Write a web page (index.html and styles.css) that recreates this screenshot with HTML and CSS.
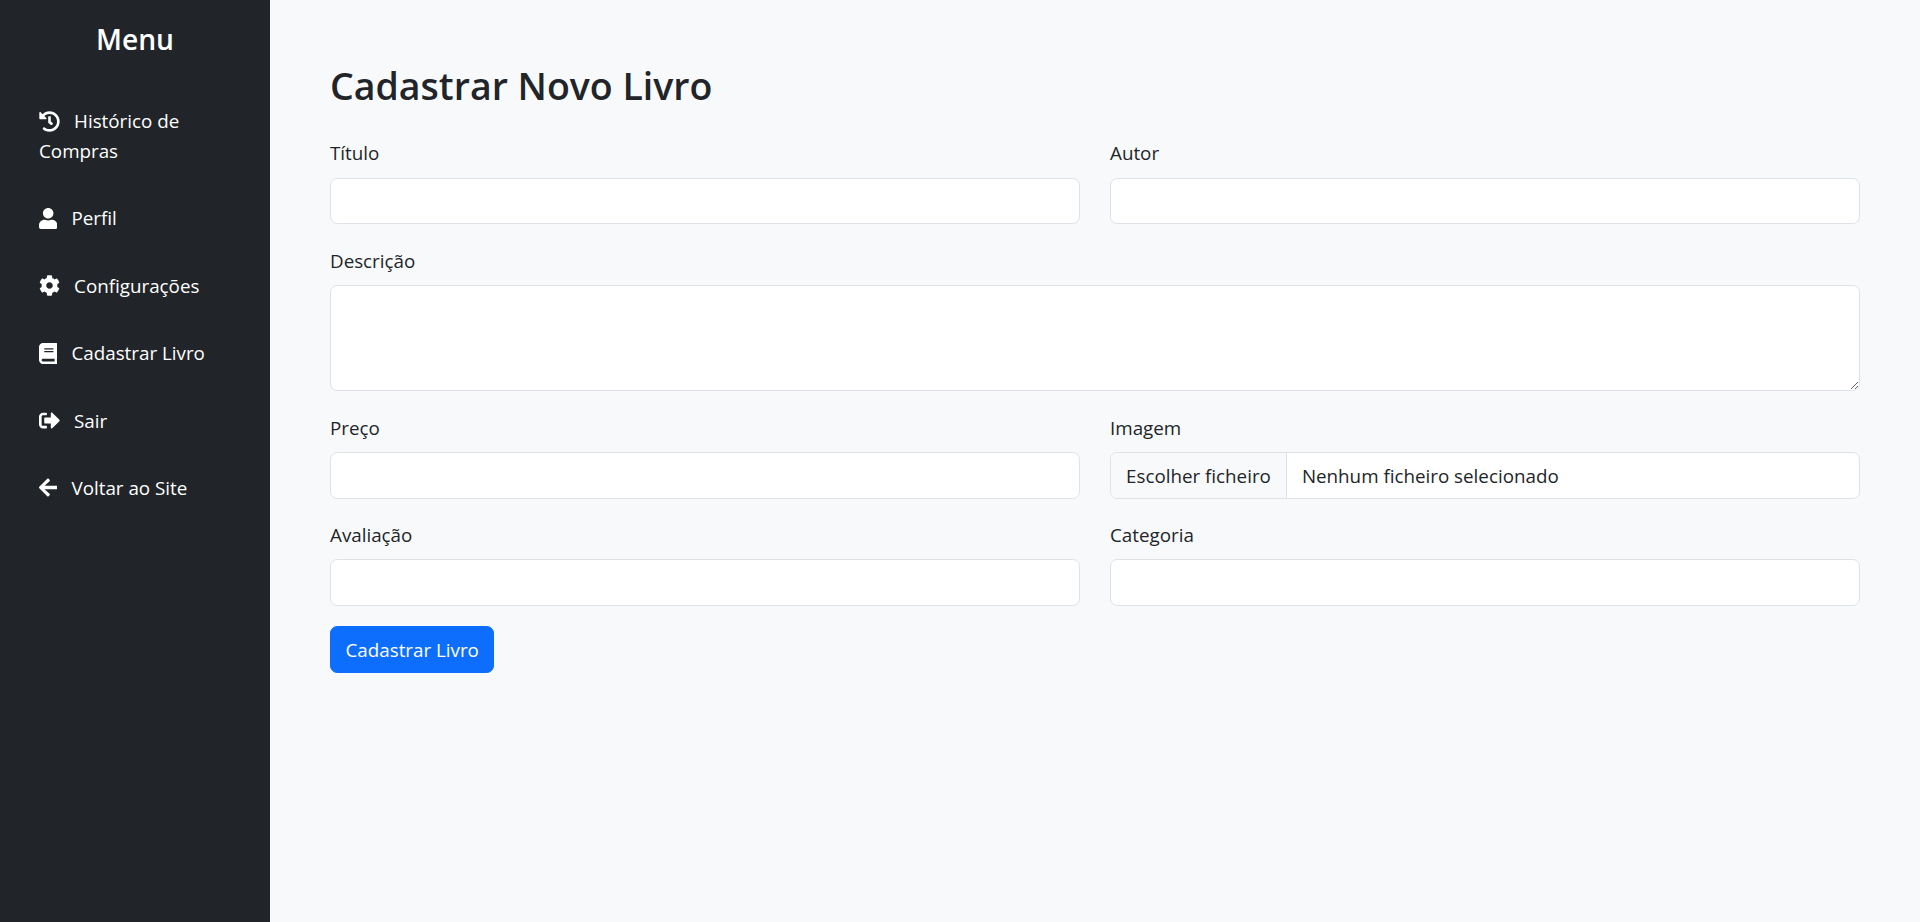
FILE: index.html
```html
<!DOCTYPE html>
<html lang="pt">
   <head>
      <title>Cadastrar Novo Livro</title>
      <link rel="stylesheet" href="styles.css">
   </head>
   <body>
      <div class="sidebar">
         <h4>Menu</h4>
         <ul class="side-menu">
            <li><a href="#"><svg class="icon w512" viewBox="0 0 512 512"><path d="M504 255.531c.253 136.64-111.18 248.372-247.82 248.468-59.015.042-113.223-20.53-155.822-54.911-11.077-8.94-11.905-25.541-1.839-35.607l11.267-11.267c8.609-8.609 22.353-9.551 31.891-1.984C173.062 425.135 212.781 440 256 440c101.705 0 184-82.311 184-184 0-101.705-82.311-184-184-184-48.814 0-93.149 18.969-126.068 49.932l50.754 50.754c10.08 10.08 2.941 27.314-11.313 27.314H24c-8.837 0-16-7.163-16-16V38.627c0-14.254 17.234-21.393 27.314-11.314l49.372 49.372C129.209 34.136 189.552 8 256 8c136.81 0 247.747 110.78 248 247.531zm-180.912 78.784l9.823-12.63c8.138-10.463 6.253-25.542-4.21-33.679L288 256.349V152c0-13.255-10.745-24-24-24h-16c-13.255 0-24 10.745-24 24v135.651l65.409 50.874c10.463 8.137 25.541 6.253 33.679-4.21z"/></svg> Histórico de Compras</a></li>
            <li><a href="#"><svg class="icon w448" viewBox="0 0 448 512"><path d="M224 256c70.7 0 128-57.3 128-128S294.7 0 224 0 96 57.3 96 128s57.3 128 128 128zm89.6 32h-16.7c-22.2 10.2-46.9 16-72.9 16s-50.6-5.8-72.9-16h-16.7C60.2 288 0 348.2 0 422.4V464c0 26.5 21.5 48 48 48h352c26.5 0 48-21.5 48-48v-41.6c0-74.2-60.2-134.4-134.4-134.4z"/></svg> Perfil</a></li>
            <li><a href="#"><svg class="icon w512" viewBox="0 0 512 512"><path d="M487.4 315.7l-42.6-24.6c4.3-23.2 4.3-47 0-70.2l42.6-24.6c4.9-2.8 7.1-8.6 5.5-14-11.1-35.6-30-67.8-54.7-94.6-3.8-4.1-10-5.1-14.8-2.3L380.8 110c-17.9-15.4-38.5-27.3-60.8-35.1V25.8c0-5.6-3.9-10.5-9.4-11.7-36.7-8.2-74.3-7.8-109.2 0-5.5 1.2-9.4 6.1-9.4 11.7V75c-22.2 7.9-42.8 19.8-60.8 35.1L88.7 85.5c-4.9-2.8-11-1.9-14.8 2.3-24.7 26.7-43.6 58.9-54.7 94.6-1.7 5.4.6 11.2 5.5 14L67.3 221c-4.3 23.2-4.3 47 0 70.2l-42.6 24.6c-4.9 2.8-7.1 8.6-5.5 14 11.1 35.6 30 67.8 54.7 94.6 3.8 4.1 10 5.1 14.8 2.3l42.6-24.6c17.9 15.4 38.5 27.3 60.8 35.1v49.2c0 5.6 3.9 10.5 9.4 11.7 36.7 8.2 74.3 7.8 109.2 0 5.5-1.2 9.4-6.1 9.4-11.7v-49.2c22.2-7.9 42.8-19.8 60.8-35.1l42.6 24.6c4.9 2.8 11 1.9 14.8-2.3 24.7-26.7 43.6-58.9 54.7-94.6 1.5-5.5-.7-11.3-5.6-14.1zM256 336c-44.1 0-80-35.9-80-80s35.9-80 80-80 80 35.9 80 80-35.9 80-80 80z"/></svg> Configurações</a></li>
            <li><a href="#"><svg class="icon w448" viewBox="0 0 448 512"><path d="M448 360V24c0-13.3-10.7-24-24-24H96C43 0 0 43 0 96v320c0 53 43 96 96 96h328c13.3 0 24-10.7 24-24v-16c0-7.5-3.5-14.3-8.9-18.7-4.2-15.4-4.2-59.3 0-74.7 5.4-4.3 8.9-11.1 8.9-18.6zM128 134c0-3.3 2.7-6 6-6h212c3.3 0 6 2.7 6 6v20c0 3.3-2.7 6-6 6H134c-3.3 0-6-2.7-6-6v-20zm0 64c0-3.3 2.7-6 6-6h212c3.3 0 6 2.7 6 6v20c0 3.3-2.7 6-6 6H134c-3.3 0-6-2.7-6-6v-20zm253.4 250H96c-17.7 0-32-14.3-32-32 0-17.6 14.4-32 32-32h285.4c-1.9 17.1-1.9 46.9 0 64z"/></svg> Cadastrar Livro</a></li>
            <li><a href="#"><svg class="icon w512" viewBox="0 0 512 512"><path d="M497 273L329 441c-15 15-41 4.5-41-17v-96H152c-13.3 0-24-10.7-24-24v-96c0-13.3 10.7-24 24-24h136V88c0-21.4 25.9-32 41-17l168 168c9.3 9.4 9.3 24.6 0 34zM192 436v-40c0-6.6-5.4-12-12-12H96c-17.7 0-32-14.3-32-32V160c0-17.7 14.3-32 32-32h84c6.6 0 12-5.4 12-12V76c0-6.6-5.4-12-12-12H96c-53 0-96 43-96 96v192c0 53 43 96 96 96h84c6.6 0 12-5.4 12-12z"/></svg> Sair</a></li>
            <li><a href="#"><svg class="icon w448" viewBox="0 0 448 512"><path d="M257.5 445.1l-22.2 22.2c-9.4 9.4-24.6 9.4-33.9 0L7 273c-9.4-9.4-9.4-24.6 0-33.9L201.4 44.7c9.4-9.4 24.6-9.4 33.9 0l22.2 22.2c9.5 9.5 9.3 25-.4 34.3L136.6 216H424c13.3 0 24 10.7 24 24v32c0 13.3-10.7 24-24 24H136.6l120.5 114.8c9.8 9.3 10 24.8.4 34.3z"/></svg> Voltar ao Site</a></li>
         </ul>
      </div>
      <div class="content">
         <h2>Cadastrar Novo Livro</h2>
         <form class="book-form">
            <div class="field">
               <label>Título</label>
               <input type="text" class="form-control">
            </div>
            <div class="field">
               <label>Autor</label>
               <input type="text" class="form-control">
            </div>
            <div class="field full">
               <label>Descrição</label>
               <textarea class="form-control area"></textarea>
            </div>
            <div class="field">
               <label>Preço</label>
               <input type="text" class="form-control">
            </div>
            <div class="field">
               <label>Imagem</label>
               <div class="form-control file-control">
                  <span class="file-btn">Escolher ficheiro</span>
                  <span class="file-name">Nenhum ficheiro selecionado</span>
               </div>
            </div>
            <div class="field">
               <label>Avaliação</label>
               <input type="text" class="form-control">
            </div>
            <div class="field">
               <label>Categoria</label>
               <input type="text" class="form-control">
            </div>
         </form>
         <button type="button" class="btn-primary">Cadastrar Livro</button>
      </div>
   </body>
</html>
```
FILE: styles.css
```css
* {
   margin: 0;
   padding: 0;
   box-sizing: border-box;
   font-family: "Open Sans", "Noto Sans", sans-serif;
}
body {
   display: flex;
   min-height: 922px;
   background-color: #f8f9fa;
   color: #212529;
   font-size: 18.8px;
   line-height: 28.8px;
}
.sidebar {
   width: 270px;
   flex-shrink: 0;
   padding: 22px 39px;
   background-color: #212529;
   color: #ffffff;
}
.sidebar h4 {
   font-size: 28.2px;
   font-weight: 600;
   line-height: 34px;
   text-align: center;
   margin-bottom: 50px;
}
.side-menu {
   list-style: none;
   line-height: 30px;
}
.side-menu li {
   margin-bottom: 37.4px;
}
.side-menu a {
   color: #ffffff;
   text-decoration: none;
}
.icon {
   height: 21px;
   fill: currentColor;
   vertical-align: -3.5px;
   margin-right: 9.2px;
}
.w512 {
   width: 21px;
}
.w448 {
   width: 18.4px;
}
.content {
   flex: 1;
   padding: 63px 60px;
}
.content h2 {
   font-size: 37.5px;
   font-weight: 600;
   line-height: 46px;
   margin-bottom: 30.4px;
}
.book-form {
   display: grid;
   grid-template-columns: 1fr 1fr;
   column-gap: 30px;
   row-gap: 22.4px;
}
.field.full {
   grid-column: span 2;
}
.field label {
   display: block;
   margin-bottom: 9.6px;
}
.form-control {
   display: block;
   width: 100%;
   height: 46.4px;
   background: #ffffff;
   border: 1px solid #dee2e6;
   border-radius: 7.2px;
   color: #212529;
   font-size: 18.8px;
   padding: 7px 15px;
}
.area {
   height: 106.4px;
}
.file-control {
   display: flex;
   align-items: stretch;
   padding: 0;
   overflow: hidden;
}
.file-btn {
   display: flex;
   align-items: center;
   padding: 2px 15px 0;
   background: #f8f9fa;
   border-right: 1px solid #dee2e6;
}
.file-name {
   display: flex;
   align-items: center;
   padding: 2px 15px 0;
}
.btn-primary {
   display: block;
   margin-top: 20.4px;
   height: 47px;
   padding: 0 14.5px;
   background: #0d6efd;
   border: 1px solid #0d6efd;
   border-radius: 7.2px;
   color: #ffffff;
   font-size: 18.8px;
}
```
